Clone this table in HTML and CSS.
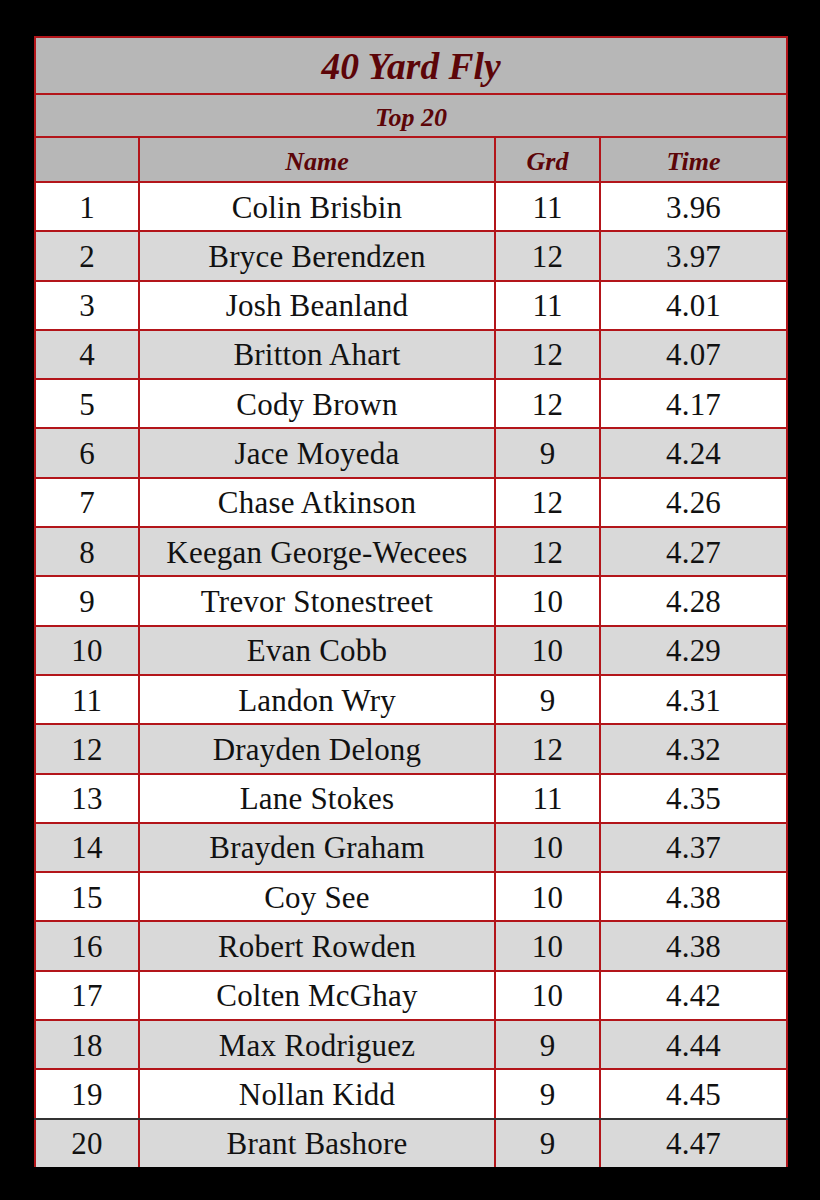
FILE: index.html
```html
<!DOCTYPE html>
<html>
<head>
<meta charset="utf-8">
<link rel="stylesheet" href="styles.css">
</head>
<body>
<table class="board">
  <colgroup>
    <col class="c-rank"><col class="c-name"><col class="c-grd"><col class="c-time">
  </colgroup>
  <thead>
    <tr class="title-row"><th colspan="4">40 Yard Fly</th></tr>
    <tr class="sub-row"><th colspan="4">Top 20</th></tr>
    <tr class="head-row"><th></th><th>Name</th><th>Grd</th><th>Time</th></tr>
  </thead>
  <tbody>
    <tr><td>1</td><td>Colin Brisbin</td><td>11</td><td>3.96</td></tr>
    <tr><td>2</td><td>Bryce Berendzen</td><td>12</td><td>3.97</td></tr>
    <tr><td>3</td><td>Josh Beanland</td><td>11</td><td>4.01</td></tr>
    <tr><td>4</td><td>Britton Ahart</td><td>12</td><td>4.07</td></tr>
    <tr><td>5</td><td>Cody Brown</td><td>12</td><td>4.17</td></tr>
    <tr><td>6</td><td>Jace Moyeda</td><td>9</td><td>4.24</td></tr>
    <tr><td>7</td><td>Chase Atkinson</td><td>12</td><td>4.26</td></tr>
    <tr><td>8</td><td>Keegan George-Wecees</td><td>12</td><td>4.27</td></tr>
    <tr><td>9</td><td>Trevor Stonestreet</td><td>10</td><td>4.28</td></tr>
    <tr><td>10</td><td>Evan Cobb</td><td>10</td><td>4.29</td></tr>
    <tr><td>11</td><td>Landon Wry</td><td>9</td><td>4.31</td></tr>
    <tr><td>12</td><td>Drayden Delong</td><td>12</td><td>4.32</td></tr>
    <tr><td>13</td><td>Lane Stokes</td><td>11</td><td>4.35</td></tr>
    <tr><td>14</td><td>Brayden Graham</td><td>10</td><td>4.37</td></tr>
    <tr><td>15</td><td>Coy See</td><td>10</td><td>4.38</td></tr>
    <tr><td>16</td><td>Robert Rowden</td><td>10</td><td>4.38</td></tr>
    <tr><td>17</td><td>Colten McGhay</td><td>10</td><td>4.42</td></tr>
    <tr><td>18</td><td>Max Rodriguez</td><td>9</td><td>4.44</td></tr>
    <tr><td>19</td><td>Nollan Kidd</td><td>9</td><td>4.45</td></tr>
    <tr class="last"><td>20</td><td>Brant Bashore</td><td>9</td><td>4.47</td></tr>
  </tbody>
</table>
</body>
</html>
```
FILE: styles.css
```css
html, body {
  margin: 0;
  padding: 0;
  background: #000;
}
body {
  padding: 36px 0 0 34px;
  font-family: "Liberation Serif", "DejaVu Serif", serif;
}
.board {
  border-collapse: collapse;
  width: 752px;
  table-layout: fixed;
}
.c-rank { width: 104px; }
.c-name { width: 356px; }
.c-grd { width: 105px; }
.c-time { width: 187px; }
.board th, .board td {
  border: 2px solid #b3151a;
  padding: 0;
  text-align: center;
  vertical-align: middle;
  line-height: 1.1;
}
.board th {
  background: #b7b7b7;
  color: #5c0508;
  font-style: italic;
  font-weight: bold;
}
.title-row th {
  height: 53px;
  font-size: 37.5px;
  padding-top: 2px;
}
.sub-row th {
  height: 35px;
  font-size: 26px;
  padding-top: 6px;
}
.head-row th {
  height: 38px;
  font-size: 26px;
  padding-top: 5px;
}
.board td {
  height: 45.3px;
  font-size: 31px;
  letter-spacing: 0.2px;
  color: #111;
  background: #fff;
  padding-top: 2px;
}
.board tbody tr:nth-child(even) td {
  background: #d9d9d9;
}
.board tr.last td {
  border-top-color: #333;
  border-bottom: none;
}
.board tbody tr:nth-last-child(2) td {
  border-bottom-color: #333;
}
```
